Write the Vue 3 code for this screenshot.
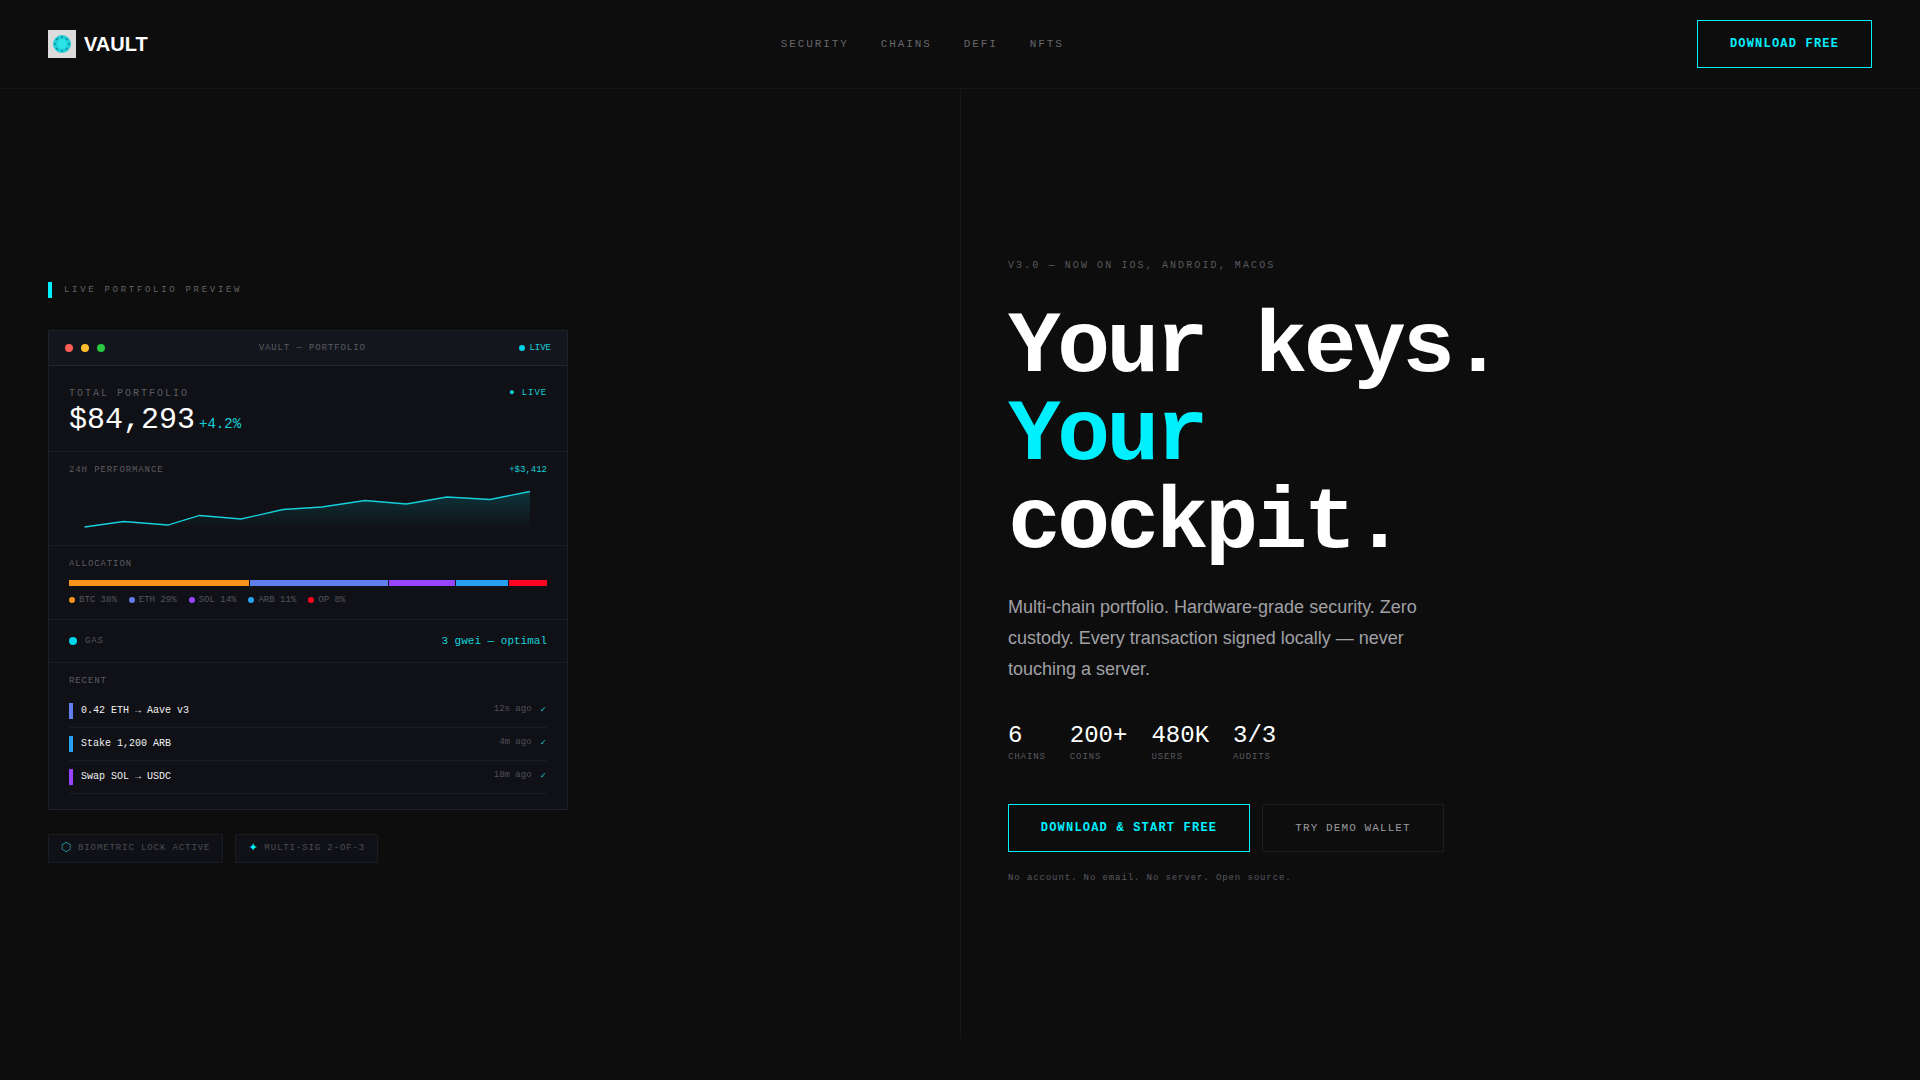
<template>
  <div class="page">
    <header class="topbar">
      <div class="brand">
        <span class="logo">
          <svg width="20" height="20" viewBox="0 0 20 20">
            <circle cx="10" cy="10" r="9" fill="#1fd0d8" />
            <circle v-for="d in logoDots" :key="d[0] + '-' + d[1]" :cx="d[0]" :cy="d[1]" r="1.1" fill="#0f97a2" />
            <circle cx="10" cy="10" r="4.8" fill="#2ce4ea" />
          </svg>
        </span>
        <span class="brand-name">VAULT</span>
      </div>
      <nav class="nav">
        <a v-for="item in navItems" :key="item">{{ item }}</a>
      </nav>
      <button class="btn btn-primary btn-top">DOWNLOAD FREE</button>
    </header>

    <main class="split">
      <section class="left">
        <div class="eyebrow">LIVE PORTFOLIO PREVIEW</div>

        <div class="card">
          <div class="titlebar">
            <div class="lights">
              <i class="red"></i>
              <i class="amber"></i>
              <i class="green"></i>
            </div>
            <span class="window-title">VAULT — PORTFOLIO</span>
            <span class="live-badge"><b></b>LIVE</span>
          </div>

          <div class="block total">
            <div class="row">
              <span class="label wide">TOTAL PORTFOLIO</span>
              <span class="live-text">● LIVE</span>
            </div>
            <div class="amount">$84,293<span>+4.2%</span></div>
          </div>

          <div class="block perf">
            <div class="row">
              <span class="label">24H PERFORMANCE</span>
              <span class="gain">+$3,412</span>
            </div>
            <svg class="spark" width="479" height="56" viewBox="0 0 479 56">
              <defs>
                <linearGradient id="sparkFill" x1="0" y1="0" x2="0" y2="1">
                  <stop offset="0" stop-color="#00f0ff" stop-opacity="0.16" />
                  <stop offset="1" stop-color="#00f0ff" stop-opacity="0" />
                </linearGradient>
              </defs>
              <path :d="sparkLine + ' L461 46 L15 46 Z'" fill="url(#sparkFill)" />
              <path :d="sparkLine" fill="none" stroke="#14d0dc" stroke-width="1.3" />
            </svg>
          </div>

          <div class="block alloc">
            <div class="label">ALLOCATION</div>
            <div class="bar">
              <i
                v-for="a in allocation"
                :key="a.name"
                :style="{ flex: a.pct, background: a.color }"
              ></i>
            </div>
            <div class="legend">
              <span v-for="a in allocation" :key="a.name">
                <b :style="{ background: a.color }"></b>{{ a.name }} {{ a.pct }}%
              </span>
            </div>
          </div>

          <div class="block gas">
            <span class="gas-name"><b></b>GAS</span>
            <span class="gas-value">3 gwei — optimal</span>
          </div>

          <div class="block recent">
            <div class="label">RECENT</div>
            <div v-for="tx in txs" :key="tx.text" class="tx">
              <i :style="{ background: tx.color }"></i>
              <span class="tx-text">{{ tx.text }}</span>
              <span class="tx-time">{{ tx.time }}</span>
              <span class="tx-check">✓</span>
            </div>
          </div>
        </div>

        <div class="chips">
          <div class="chip"><span class="chip-icon dim">⬡</span>BIOMETRIC LOCK ACTIVE</div>
          <div class="chip"><span class="chip-icon star">✦</span>MULTI-SIG 2-OF-3</div>
        </div>
      </section>

      <section class="right">
        <div class="version">V3.0 — NOW ON IOS, ANDROID, MACOS</div>
        <h1 class="headline">
          <span>Your keys.</span>
          <span class="accent">Your</span>
          <span>cockpit.</span>
        </h1>
        <p class="lead">
          Multi-chain portfolio. Hardware-grade security. Zero custody. Every
          transaction signed locally — never touching a server.
        </p>
        <div class="stats">
          <div v-for="s in stats" :key="s.label" class="stat">
            <div class="stat-value">{{ s.value }}</div>
            <div class="stat-label">{{ s.label }}</div>
          </div>
        </div>
        <div class="actions">
          <button class="btn btn-primary btn-big">DOWNLOAD &amp; START FREE</button>
          <button class="btn btn-ghost">TRY DEMO WALLET</button>
        </div>
        <div class="fineprint">No account. No email. No server. Open source.</div>
      </section>
    </main>
  </div>
</template>

<script setup>
const navItems = ["SECURITY", "CHAINS", "DEFI", "NFTS"];

// dark specks round the logo's flower
const logoDots = [
  [10, 3.2], [10, 16.8], [3.2, 10], [16.8, 10],
  [5.2, 5.2], [14.8, 5.2], [5.2, 14.8], [14.8, 14.8],
];

const sparkPoints = [
  [15.5, 45], [54.7, 39.5], [98.8, 43], [130.6, 33.5], [172, 37], [214, 27.5],
  [253, 25], [296, 18.5], [337.5, 22], [378, 15], [421, 17.5], [461, 9.5],
];
const sparkLine = sparkPoints
  .map((p, i) => (i === 0 ? "M" : "L") + p[0] + " " + p[1])
  .join(" ");

const allocation = [
  { name: "BTC", pct: 38, color: "#f7931a" },
  { name: "ETH", pct: 29, color: "#627eea" },
  { name: "SOL", pct: 14, color: "#9945ff" },
  { name: "ARB", pct: 11, color: "#28a0f0" },
  { name: "OP", pct: 8, color: "#ff0420" },
];

const txs = [
  { text: "0.42 ETH → Aave v3", time: "12s ago", color: "#627eea" },
  { text: "Stake 1,200 ARB", time: "4m ago", color: "#28a0f0" },
  { text: "Swap SOL → USDC", time: "18m ago", color: "#9945ff" },
];

const stats = [
  { value: "6", label: "CHAINS" },
  { value: "200+", label: "COINS" },
  { value: "480K", label: "USERS" },
  { value: "3/3", label: "AUDITS" },
];
</script>

<style>
html,
body {
  margin: 0;
  background: #0d0d0d;
}
</style>

<style scoped>
.page {
  min-height: 1080px;
  background: #0d0d0d;
  color: #fff;
  font-family: "Liberation Mono", monospace;
}
.topbar {
  height: 88px;
  display: flex;
  justify-content: space-between;
  align-items: center;
  padding: 0 48px;
  border-bottom: 1px solid #171719;
}
.brand {
  display: flex;
  align-items: center;
  gap: 8px;
}
.logo {
  width: 28px;
  height: 28px;
  background: #dcdcdc;
  display: flex;
  align-items: center;
  justify-content: center;
}
.brand-name {
  font-family: "Liberation Sans", sans-serif;
  font-weight: 700;
  font-size: 20px;
}
.nav {
  display: flex;
  gap: 32px;
}
.nav a {
  font-size: 11px;
  letter-spacing: 1.9px;
  color: #66666c;
}
.btn {
  font-family: "Liberation Mono", monospace;
  background: transparent;
  cursor: pointer;
  padding: 0;
}
.btn-primary {
  border: 1px solid #00f0ff;
  color: #00f0ff;
  font-weight: 700;
}
.btn-top {
  width: 175px;
  height: 48px;
  font-size: 12px;
  letter-spacing: 0.1em;
}
.split {
  display: grid;
  grid-template-columns: 1fr 1fr;
  height: 949px;
}
.left {
  padding: 17px 48px 0;
  display: flex;
  flex-direction: column;
  justify-content: center;
}
.eyebrow {
  font-size: 9px;
  letter-spacing: 0.3em;
  color: #626268;
  line-height: 16px;
  padding-left: 12px;
  border-left: 4px solid #00f0ff;
  margin-bottom: 32px;
}
.card {
  width: 520px;
  box-sizing: border-box;
  background: #101116;
  border: 1px solid #1e2028;
}
.titlebar {
  height: 34px;
  display: flex;
  align-items: center;
  justify-content: space-between;
  padding: 0 16px;
  background: #14161d;
  border-bottom: 1px solid #222730;
}
.lights {
  display: flex;
  gap: 8px;
}
.lights i {
  width: 8px;
  height: 8px;
  border-radius: 50%;
}
.red {
  background: #ff5f57;
}
.amber {
  background: #ffbd2e;
}
.green {
  background: #28c840;
}
.window-title {
  font-size: 9px;
  letter-spacing: 0.1em;
  color: #5c5c62;
}
.live-badge {
  display: flex;
  align-items: center;
  gap: 4px;
  font-size: 9px;
  color: #14d0dc;
}
.live-badge b {
  width: 6px;
  height: 6px;
  border-radius: 50%;
  background: #00d4e8;
}
.block {
  padding: 0 20px;
  border-bottom: 1px solid #1a1c22;
}
.block:last-child {
  border-bottom: none;
}
.row {
  display: flex;
  justify-content: space-between;
  align-items: center;
}
.label {
  font-size: 9px;
  letter-spacing: 0.1em;
  color: #5c5c62;
}
.label.wide {
  font-size: 10px;
  letter-spacing: 0.2em;
}
.live-text {
  font-size: 9px;
  letter-spacing: 0.1em;
  color: #14d0dc;
}
.total {
  height: 86px;
  box-sizing: border-box;
  padding-top: 22px;
}
.amount {
  font-size: 30px;
  line-height: 36px;
  margin-top: 3px;
  display: flex;
  align-items: baseline;
}
.amount span {
  font-size: 14px;
  color: #14d0dc;
  margin-left: 4px;
}
.perf {
  height: 94px;
  box-sizing: border-box;
  padding-top: 13px;
}
.gain {
  font-size: 9px;
  color: #14d0dc;
}
.spark {
  display: block;
  margin-top: 7px;
}
.alloc {
  height: 74px;
  box-sizing: border-box;
  padding-top: 13px;
}
.bar {
  display: flex;
  gap: 1px;
  height: 6px;
  margin-top: 11px;
}
.legend {
  display: flex;
  gap: 12px;
  margin-top: 9px;
  font-size: 9px;
  color: #55555a;
}
.legend span {
  display: flex;
  align-items: center;
  gap: 4px;
}
.legend b {
  width: 6px;
  height: 6px;
  border-radius: 50%;
}
.gas {
  height: 43px;
  box-sizing: border-box;
  display: flex;
  align-items: center;
  justify-content: space-between;
}
.gas-name {
  display: flex;
  align-items: center;
  gap: 8px;
  font-size: 9px;
  letter-spacing: 0.1em;
  color: #55555a;
}
.gas-name b {
  width: 8px;
  height: 8px;
  border-radius: 50%;
  background: #00d4e8;
}
.gas-value {
  font-size: 11px;
  color: #14d0dc;
}
.recent {
  padding-top: 13px;
  padding-bottom: 15px;
}
.recent .label {
  margin-bottom: 9px;
}
.tx {
  height: 33px;
  box-sizing: border-box;
  display: flex;
  align-items: center;
  border-bottom: 1px solid #1a1c22;
}
.tx i {
  width: 4px;
  height: 16px;
  margin-right: 8px;
}
.tx-text {
  font-size: 10px;
  color: #f0f0f0;
  flex: 1;
}
.tx-time {
  font-size: 9px;
  color: #505056;
  margin-top: -3px;
}
.tx-check {
  font-size: 9px;
  color: #14d0dc;
  margin-left: 9px;
  margin-right: 1px;
  margin-top: -3px;
}
.chips {
  display: flex;
  gap: 12px;
  margin-top: 24px;
}
.chip {
  height: 29px;
  box-sizing: border-box;
  background: #101116;
  border: 1px solid #1a1c22;
  display: flex;
  align-items: center;
  padding: 0 12px;
  font-size: 9px;
  letter-spacing: 0.1em;
  color: #4c4c52;
}
.chip-icon {
  width: 10px;
  text-align: center;
  color: #00f0ff;
  font-size: 12px;
  line-height: 12px;
  letter-spacing: 0;
  margin-right: 7px;
}
.chip-icon.dim {
  color: #22a3ad;
}
.chip-icon.star {
  font-size: 15px;
  margin-right: 6px;
}
.right {
  padding: 15px 48px 0 47px;
  border-left: 1px solid #171719;
  display: flex;
  flex-direction: column;
  justify-content: center;
  align-items: flex-start;
}
.version {
  font-size: 10px;
  letter-spacing: 2.1px;
  color: #5a5a60;
  margin-bottom: 33px;
}
.headline {
  margin: 0 0 24px;
  font-size: 88px;
  line-height: 88px;
  font-weight: 700;
  letter-spacing: -0.04em;
}
.headline span {
  display: block;
}
.accent {
  color: #00f0ff;
}
.lead {
  margin: 0 0 37px;
  max-width: 440px;
  font-family: "Liberation Sans", sans-serif;
  font-size: 18px;
  line-height: 31px;
  color: #a0a0a5;
}
.stats {
  display: flex;
  gap: 24px;
  margin-bottom: 42px;
}
.stat-value {
  font-size: 24px;
  line-height: 28px;
}
.stat-label {
  font-size: 9px;
  letter-spacing: 0.1em;
  color: #5a5a60;
  margin-top: 2px;
}
.actions {
  display: flex;
  gap: 12px;
}
.btn-big {
  width: 242px;
  height: 48px;
  font-size: 12px;
  letter-spacing: 0.1em;
}
.btn-ghost {
  width: 182px;
  height: 48px;
  border: 1px solid #1e1e20;
  color: #9a9a9f;
  font-size: 11px;
  letter-spacing: 0.1em;
}
.fineprint {
  margin-top: 21px;
  font-size: 9px;
  letter-spacing: 0.1em;
  color: #5a5a60;
}
</style>
